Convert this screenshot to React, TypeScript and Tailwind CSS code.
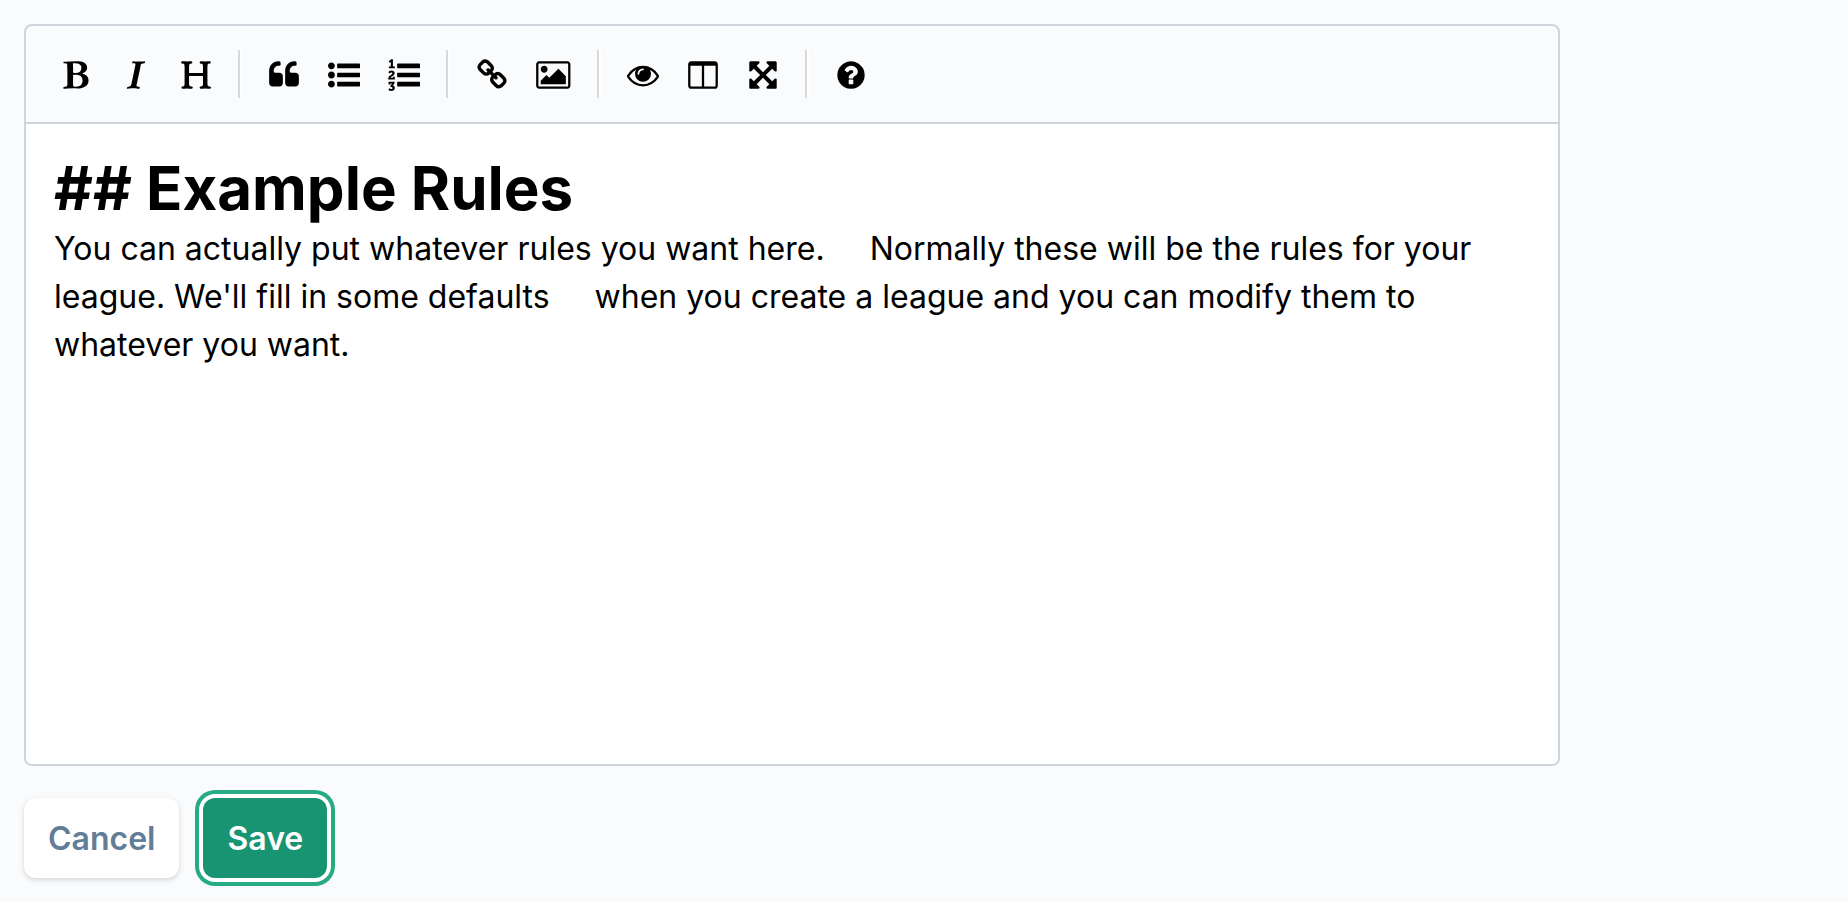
import React from 'react';

interface IconDef {
    label: string;
    viewBox?: string;
    path: string;
}

const SQUARE = '0 0 1792 1792';

const BAR = 'q0-13 9.5-22.5t22.5-9.5h1216q13 0 22.5 9.5t9.5 22.5v192q0 13-9.5 22.5t-22.5 9.5h-1216q-13 0-22.5-9.5t-9.5-22.5z';
const BARS = `M512 288${BAR}M512 800${BAR}M512 1312${BAR}`;

// Toolbar buttons, grouped the way the separators split them
const groups: IconDef[][] = [
    [
        {
            label: 'Bold',
            path: 'M747 1521q74 32 140 32 376 0 376-335 0-114-41-180-27-44-61.5-74t-67.5-46.5-80.5-25-84-10.5-94.5-2q-73 0-101 10 0 53-.5 159t-.5 158q0 8-1 67.5t-.5 96.5 4.5 83.5 12 66.5zm-14-746q42 7 109 7 82 0 143-13t110-44.5 74.5-89.5 25.5-142q0-70-29-122.5t-79-82-108-43.5-124-14q-50 0-130 13 0 50 4 151t4 152q0 27-.5 80t-.5 79q0 46 1 69zm-541 889l2-94q15-4 85-16t106-27q7-12 12.5-27t8.5-33.5 5.5-32.5 3-37.5.5-34v-65.5q0-982-22-1025-4-8-22-14.5t-44.5-11-49.5-7-48.5-4.5-30.5-3l-4-83q98-2 340-11.5t373-9.5q23 0 68 .5t68 .5q70 0 136.5 13t128.5 42 108 71 74 104.5 28 137.5q0 52-16.5 95.5t-39 72-64.5 57.5-73 45-84 40q154 35 256.5 134t102.5 248q0 100-35 179.5t-93.5 130.5-138 85.5-163.5 48.5-176 14q-44 0-132-3t-132-3q-106 0-307 11t-231 12z',
        },
        {
            label: 'Italic',
            path: 'M384 1662l17-85q6-2 81.5-21.5t111.5-37.5q28-35 41-101 1-7 62-289t114-543.5 52-296.5v-25q-24-13-54.5-18.5t-69.5-8-58-5.5l19-103q33 2 120 6.5t149.5 7 120.5 2.5q48 0 98.5-2.5t121-7 98.5-6.5q-5 39-19 89-30 10-101.5 28.5t-108.5 33.5q-8 19-14 42.5t-9 40-7.5 45.5-6.5 42q-27 148-87.5 419.5t-77.5 355.5q-2 9-13 58t-20 90-16 83.5-6 57.5l1 18q17 4 185 31-3 44-16 99-11 0-32.5 1.5t-32.5 1.5q-29 0-87-10t-86-10q-138-2-206-2-51 0-143 9t-121 11z',
        },
        {
            label: 'Heading',
            path: 'M1682 1664q-44 0-132.5-3.5t-133.5-3.5q-44 0-132 3.5t-132 3.5q-24 0-37-20.5t-13-45.5q0-31 17-46t39-17 51-7 45-15q33-21 33-140l-1-391q0-21-1-31-13-4-50-4h-675q-38 0-51 4-1 10-1 31l-1 371q0 142 37 164 16 10 48 13t57 3.5 45 15 20 45.5q0 26-12.5 48t-36.5 22q-47 0-139.5-3.5t-138.5-3.5q-43 0-128 3.5t-127 3.5q-23 0-35.5-21t-12.5-45q0-30 15.5-45t36-17.5 47.5-7.5 42-15q33-23 33-143l-1-57v-813q0-3 .5-26t0-36.5-1.5-38.5-3.5-42-6.5-36.5-11-31.5-16-18q-15-10-45-12t-53-2-41-14-18-45q0-26 12-48t36-22q46 0 138.5 3.5t138.5 3.5q42 0 126.5-3.5t126.5-3.5q25 0 37.5 22t12.5 48q0 30-17 43.5t-38.5 14.5-49.5 4-43 13q-35 21-35 160l1 320q0 21 1 32 13 3 39 3h699q25 0 38-3 1-11 1-32l1-320q0-139-35-160-18-11-58.5-12.5t-66-13-25.5-49.5q0-26 12.5-48t37.5-22q44 0 132 3.5t132 3.5q43 0 129-3.5t129-3.5q25 0 37.5 22t12.5 48q0 30-17.5 44t-40 14.5-51.5 3-44 12.5q-35 23-35 161l1 943q0 119 34 140 16 10 46 13.5t53.5 4.5 41.5 15.5 18 44.5q0 26-12 48t-36 22z',
        },
    ],
    [
        {
            label: 'Quote',
            path: 'M832 960v384q0 80-56 136t-136 56h-384q-80 0-136-56t-56-136v-704q0-104 40.5-198.5t109.5-163.5 163.5-109.5 198.5-40.5h64q26 0 45 19t19 45v128q0 26-19 45t-45 19h-64q-106 0-181 75t-75 181v32q0 40 28 68t68 28h224q80 0 136 56t56 136zm896 0v384q0 80-56 136t-136 56h-384q-80 0-136-56t-56-136v-704q0-104 40.5-198.5t109.5-163.5 163.5-109.5 198.5-40.5h64q26 0 45 19t19 45v128q0 26-19 45t-45 19h-64q-106 0-181 75t-75 181v32q0 40 28 68t68 28h224q80 0 136 56t56 136z',
        },
        {
            label: 'Generic List',
            path: `M384 1408q0 80-56 136t-136 56-136-56-56-136 56-136 136-56 136 56 56 136zm0-512q0 80-56 136t-136 56-136-56-56-136 56-136 136-56 136 56 56 136zm0-512q0 80-56 136t-136 56-136-56-56-136 56-136 136-56 136 56 56 136z${BARS}`,
        },
        {
            label: 'Numbered List',
            path: `M381 1620q0 80-54.5 126t-135.5 46q-106 0-172-66l57-88q49 45 106 45 29 0 50.5-14.5t21.5-42.5q0-64-105-56l-26-56q8-10 32.5-43.5t42.5-54 37-38.5v-1q-16 0-48.5 1t-48.5 1v53h-106v-152h333v88l-95 115q51 12 81 49t30 88zm2-627v159h-362q-6-36-6-54 0-51 23.5-93t56.5-68 66-47.5 56.5-43.5 23.5-45q0-25-14.5-38.5t-39.5-13.5q-46 0-81 58l-85-59q24-51 71.5-79.5t105.5-28.5q73 0 123 41.5t50 112.5q0 50-34 91.5t-75 64.5-75.5 50.5-35.5 52.5h127v-60h105zm1-580v99h-335v-99h107q0-41 .5-121.5t.5-121.5v-12h-2q-8 17-50 54l-71-76 136-127h106v404h108z${BARS}`,
        },
    ],
    [
        {
            label: 'Create Link',
            path: 'M1520 1216q0-40-28-68l-208-208q-28-28-68-28-42 0-72 32 3 3 19 18.5t21.5 21.5 15 19 13 25.5 3.5 27.5q0 40-28 68t-68 28q-15 0-27.5-3.5t-25.5-13-19-15-21.5-21.5-18.5-19q-33 31-33 73 0 40 28 68l206 207q27 27 68 27 40 0 68-26l147-146q28-28 28-67zm-703-705q0-40-28-68l-206-207q-28-28-68-28-39 0-68 27l-147 146q-28 28-28 67 0 40 28 68l208 208q27 27 68 27 42 0 72-31-3-3-19-18.5t-21.5-21.5-15-19-13-25.5-3.5-27.5q0-40 28-68t68-28q15 0 27.5 3.5t25.5 13 19 15 21.5 21.5 18.5 19q33-31 33-73zm895 705q0 120-85 203l-147 146q-83 83-203 83-121 0-204-85l-206-207q-83-83-83-203 0-123 88-209l-88-88q-86 88-208 88-120 0-204-84l-208-208q-84-84-84-204t85-203l147-146q83-83 203-83 121 0 204 85l206 207q83 83 83 203 0 123-88 209l88 88q86-88 208-88 120 0 204 84l208 208q84 84 84 204z',
        },
        {
            label: 'Insert Image',
            viewBox: '0 0 2048 1792',
            path: 'M704 576q0 80-56 136t-136 56-136-56-56-136 56-136 136-56 136 56 56 136zm1024 384v448h-1408v-192l320-320 160 160 512-512zm96-704h-1600q-13 0-22.5 9.5t-9.5 22.5v1216q0 13 9.5 22.5t22.5 9.5h1600q13 0 22.5-9.5t9.5-22.5v-1216q0-13-9.5-22.5t-22.5-9.5zm160 32v1216q0 66-47 113t-113 47h-1600q-66 0-113-47t-47-113v-1216q0-66 47-113t113-47h1600q66 0 113 47t47 113z',
        },
    ],
    [
        {
            label: 'Toggle Preview',
            path: 'M1664 960q-152-236-381-353 61 104 61 225 0 185-131.5 316.5t-316.5 131.5-316.5-131.5-131.5-316.5q0-121 61-225-229 117-381 353 133 205 333.5 326.5t434.5 121.5 434.5-121.5 333.5-326.5zm-720-384q0-20-14-34t-34-14q-125 0-214.5 89.5t-89.5 214.5q0 20 14 34t34 14 34-14 14-34q0-86 61-147t147-61q20 0 34-14t14-34zm848 384q0 34-20 69-140 230-376.5 368.5t-499.5 138.5-499.5-139-376.5-368q-20-35-20-69t20-69q140-229 376.5-368t499.5-139 499.5 139 376.5 368q20 35 20 69z',
        },
        {
            label: 'Toggle Side by Side',
            path: 'M224 1536h608v-1152h-640v1120q0 13 9.5 22.5t22.5 9.5zm1376-32v-1120h-640v1152h608q13 0 22.5-9.5t9.5-22.5zm128-1216v1216q0 66-47 113t-113 47h-1344q-66 0-113-47t-47-113v-1216q0-66 47-113t113-47h1344q66 0 113 47t47 113z',
        },
        {
            label: 'Toggle Fullscreen',
            path: 'M1411 541l-355 355 355 355 144-144q29-31 70-14 39 17 39 59v448q0 26-19 45t-45 19h-448q-42 0-59-40-17-39 14-69l144-144-355-355-355 355 144 144q31 30 14 69-17 40-59 40h-448q-26 0-45-19t-19-45v-448q0-42 40-59 39-17 69 14l144 144 355-355-355-355-144 144q-19 19-45 19-12 0-24-5-40-17-40-59v-448q0-26 19-45t45-19h448q42 0 59 40 17 39-14 69l-144 144 355 355 355-355-144-144q-31-30-14-69 17-40 59-40h448q26 0 45 19t19 45v448q0 42-39 59-13 5-25 5-26 0-45-19z',
        },
    ],
    [
        {
            label: 'Markdown Guide',
            path: 'M1024 1376v-192q0-14-9-23t-23-9h-192q-14 0-23 9t-9 23v192q0 14 9 23t23 9h192q14 0 23-9t9-23zm256-672q0-88-55.5-163t-138.5-116-170-41q-243 0-371 213-15 24 8 42l132 100q7 6 19 6 16 0 25-12 53-68 86-92 34-24 86-24 48 0 85.5 26t37.5 59q0 38-20 61t-68 45q-63 28-115.5 86.5t-52.5 125.5v36q0 14 9 23t23 9h192q14 0 23-9t9-23q0-19 21.5-49.5t54.5-49.5q32-18 49-28.5t46-35 44.5-48 28-60.5 12.5-81zm384 192q0 209-103 385.5t-279.5 279.5-385.5 103-385.5-103-279.5-279.5-103-385.5 103-385.5 279.5-279.5 385.5-103 385.5 103 279.5 279.5 103 385.5z',
        },
    ],
];

const BODY =
    "You can actually put whatever rules you want here.     Normally these will be the rules for your league. We'll fill in some defaults     when you create a league and you can modify them to whatever you want.";

const ToolbarButton: React.FC<{ icon: IconDef }> = ({ icon }) => (
    <button
        type="button"
        title={icon.label}
        aria-label={icon.label}
        className="flex h-15 min-w-15 items-center justify-center rounded-md px-[13px] pt-0.5 hover:bg-gray-100"
    >
        <svg viewBox={icon.viewBox ?? SQUARE} className="h-8 w-auto" fill="currentColor" fillRule="evenodd" aria-hidden="true">
            <path d={icon.path} />
        </svg>
    </button>
);

const Toolbar: React.FC = () => (
    <div role="toolbar" aria-label="Formatting" className="flex flex-wrap items-center border-b-2 border-[#cfd3dc] px-5 py-[18px]">
        {groups.map((group, i) => (
            <React.Fragment key={i}>
                {i > 0 && <div className="mx-3 h-12 w-1 border-r-2 border-l-2 border-r-white border-l-[#d9d9d9]" />}
                {group.map(icon => (
                    <ToolbarButton key={icon.label} icon={icon} />
                ))}
            </React.Fragment>
        ))}
    </div>
);

const App: React.FC = () => {
    return (
        <div className="min-h-screen bg-[#f9fbfd] p-6 font-['Inter',sans-serif] text-black">
            <form className="max-w-[1536px]" onSubmit={e => e.preventDefault()}>
                <div className="rounded-lg border-2 border-[#cfd3dc]">
                    <Toolbar />
                    <div
                        role="textbox"
                        aria-multiline="true"
                        aria-label="Rules"
                        contentEditable
                        suppressContentEditableWarning
                        className="min-h-[640px] rounded-b-md bg-white px-7 py-[27px] text-[32px] leading-12 whitespace-pre-wrap outline-none"
                    >
                        <div className="text-[60px] leading-[74px] font-bold">## Example Rules</div>
                        <div>{BODY}</div>
                    </div>
                </div>
                <div className="mt-8 flex gap-6 text-[32px] leading-12 font-semibold">
                    <button
                        type="button"
                        className="rounded-xl bg-white px-6 pt-[17px] pb-[15px] text-[#627d98] shadow-[0_2px_6px_rgba(0,0,0,0.1),0_2px_4px_rgba(0,0,0,0.06)]"
                    >
                        Cancel
                    </button>
                    <button
                        type="submit"
                        className="rounded-xl bg-[#199473] px-6 pt-[17px] pb-[15px] text-white shadow-[0_2px_12px_rgba(0,0,0,0.1)] ring-4 ring-[#27ab83] outline-none ring-inset-0 ring-offset-4 ring-offset-white"
                    >
                        Save
                    </button>
                </div>
            </form>
        </div>
    );
};

export default App;
